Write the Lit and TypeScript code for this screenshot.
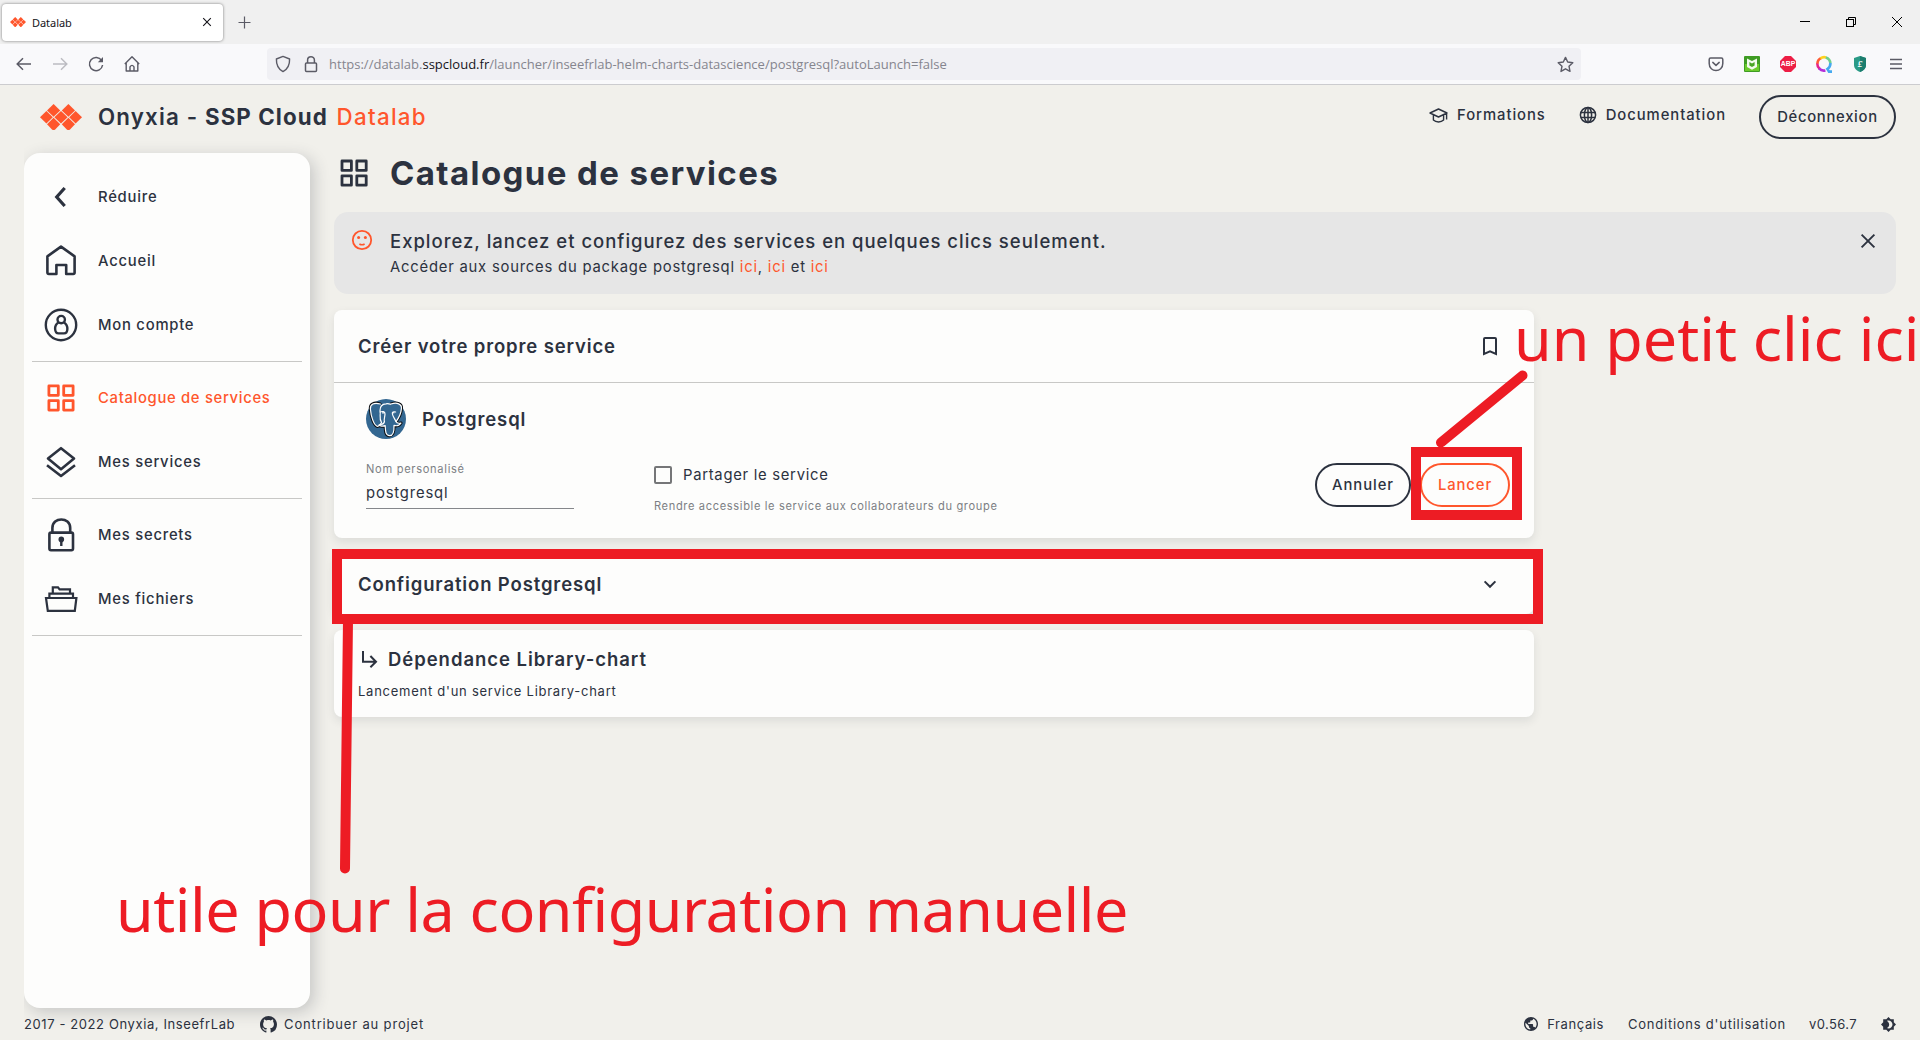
import { LitElement, html, css, svg } from "lit";
import { customElement } from "lit/decorators.js";
import { classMap } from "lit/directives/class-map.js";

const gridShape = svg`<g fill="none" stroke="currentColor" stroke-width="2.8" stroke-linejoin="round">
  <rect x="2" y="2" width="9.4" height="9.4"/><rect x="16.8" y="2" width="9.4" height="9.4"/>
  <rect x="2" y="16.8" width="9.4" height="9.4"/><rect x="16.8" y="16.8" width="9.4" height="9.4"/></g>`;

const navIcons = {
  back: svg`<path d="M19.5 8 L11.5 17 L19.5 26" transform="translate(1.2 0)" fill="none" stroke="currentColor" stroke-width="3.2"/>`,
  home: svg`<path d="M3.4 12.4 L17 2.6 L30.6 12.4 V28.6 Q30.6 30 29.2 30 H22.2 V21 H12.4 V30 H4.8 Q3.4 30 3.4 28.6 Z" fill="none" stroke="currentColor" stroke-width="2.6" stroke-linejoin="round"/>`,
  account: svg`<g fill="none" stroke="currentColor" stroke-width="2.4"><circle cx="17" cy="17" r="15.2"/><path d="M14.4 14.4 C9.6 17.4 10.4 25.4 14.6 25.4 H20 C24.2 25.4 24.800 17.400 20 14.400"/><circle cx="17.200" cy="11.600" r="3.700"/></g>`,
  catalog: svg`<g transform="translate(2.9 2.9)">${gridShape}</g>`,
  services: svg`<g fill="none" stroke="currentColor" stroke-width="2.6" stroke-linejoin="round"><path d="M17 3.2 L30 13.6 L17 24.2 L4 13.6 Z"/><path d="M3 20.2 L17 31 L31 20.2"/></g>`,
  secrets: svg`<g fill="none" stroke="currentColor" stroke-width="2.6" stroke-linejoin="round"><rect x="5.4" y="14.6" width="23.6" height="17.6" rx="1.6"/><path d="M8.4 14.4 V10 C8.4 -1.4 26.2 -1.4 26.2 10 V14.4"/></g><circle cx="17.3" cy="21.4" r="2.8" fill="currentColor"/><path d="M17.3 22 V28" stroke="currentColor" stroke-width="2.4"/>`,
  files: svg`<g fill="none" stroke="currentColor" stroke-width="2.2"><path d="M2 16 H32.4 L30.8 28.8 H3.8 Z"/><path d="M5.4 15.6 V11.6 H29 V15.6"/><path d="M8.8 11.4 V5.4 H14 L15.6 7.4 H26 V11.4"/></g>`,
};

type NavEntry = { icon: keyof typeof navIcons; label: string; active?: boolean; ruleAfter?: boolean };
const navigation: NavEntry[] = [
  { icon: "back", label: "Réduire" },
  { icon: "home", label: "Accueil" },
  { icon: "account", label: "Mon compte", ruleAfter: true },
  { icon: "catalog", label: "Catalogue de services", active: true },
  { icon: "services", label: "Mes services", ruleAfter: true },
  { icon: "secrets", label: "Mes secrets" },
  { icon: "files", label: "Mes fichiers", ruleAfter: true },
];

const logo = svg`<g fill="#ff562c">
  <path d="M13.6 0 L20.2 6.4 L13.6 12.8 L7 6.4 Z"/><path d="M28.4 0 L35 6.4 L28.4 12.8 L21.8 6.4 Z"/>
  <path d="M6.4 7 L12.8 13.2 L6.4 19.4 L0 13.2 Z"/><path d="M21 7 L27.6 13.2 L21 19.6 L14.4 13.2 Z"/><path d="M35.6 7 L42 13.2 L35.6 19.4 L29.2 13.2 Z"/>
  <path d="M13.6 13.8 L20.2 20.2 L15.2 25.4 Q13.6 26.6 12 25.4 L7 20.2 Z"/><path d="M28.4 13.8 L35 20.2 L30 25.4 Q28.4 26.6 26.8 25.4 L21.8 20.2 Z"/></g>`;

@customElement("browser-bar")
export class BrowserBar extends LitElement {
  static styles = css`
    :host { display: block; font-family: "Noto Sans", "Open Sans", sans-serif; }
    svg { display: block; flex: none; }
    .strip { display: flex; align-items: center; height: 44px; background: #f0f0f0; box-sizing: border-box; padding-left: 2px; }
    .tab { display: flex; align-items: center; width: 221px; height: 37px; box-sizing: border-box; padding: 0 11px 0 8px; border-radius: 4px; background: #fff; box-shadow: 0 0 3px rgba(0,0,0,.5); }
    .tabname { flex: 1; margin-left: 6px; font-size: 11px; letter-spacing: -.05px; color: #15141a; }
    .plus { margin-left: 15px; }
    .window { display: flex; gap: 34px; margin-left: auto; padding-right: 17px; }
    .tools { display: flex; align-items: center; height: 40px; background: #f9f9fb; border-bottom: 1px solid #cccccf; padding: 0 15px; color: #5b5b66; }
    .nav { display: flex; gap: 18px; width: 252px; }
    .url { display: flex; align-items: center; width: 1314px; height: 32px; box-sizing: border-box; padding: 0 7px 0 8px; border-radius: 4px; background: #f0f0f4; }
    .lock { margin-left: 11px; }
    .address { flex: 1; margin-left: 9px; font: 13px/20px "Open Sans", "Noto Sans", sans-serif; letter-spacing: .01px; color: #85858e; white-space: nowrap; }
    .domain { color: #15141a; }
    .extensions { display: flex; align-items: center; gap: 18px; margin-left: auto; }
    .abp { font: 700 6.5px "Liberation Sans", sans-serif; }
    .letter { font: italic 700 9px "Liberation Serif", serif; }
  `;
  render() {
    return html`
      <div class="strip">
        <div class="tab">
          <svg width="16" height="10" viewBox="0 0 42 26">${logo}</svg>
          <span class="tabname">Datalab</span>
          <svg width="10" height="10" viewBox="0 0 10 10"><path d="M1.200 1.200 L8.800 8.800 M8.800 1.200 L1.200 8.800" stroke="#15141a" stroke-width="1.1"/></svg>
        </div>
        <svg class="plus" width="13" height="13" viewBox="0 0 13 13"><path d="M6.5 .5 V12.5 M.5 6.5 H12.5" stroke="#5b5b66" stroke-width="1.2"/></svg>
        <div class="window">
          <svg width="12" height="12" viewBox="0 0 12 12"><path d="M1 5.5 H11" stroke="#000"/></svg>
          <svg width="12" height="12" viewBox="0 0 12 12" fill="none" stroke="#000"><rect x="1.5" y="3.5" width="7" height="7"/><path d="M3.5 3.5 V1.5 H10.5 V8.5 H8.5"/></svg>
          <svg width="12" height="12" viewBox="0 0 12 12"><path d="M1 1 L11 11 M11 1 L1 11" stroke="#000"/></svg>
        </div>
      </div>
      <div class="tools">
        <div class="nav">
          <svg width="18" height="18" viewBox="0 0 18 18" fill="none" stroke="currentColor" stroke-width="1.5"><path d="M16 9 H2.5 M8 3.2 L2.2 9 L8 14.8"/></svg>
          <svg width="18" height="18" viewBox="0 0 18 18" fill="none" stroke="#bcbcc2" stroke-width="1.5"><path d="M2 9 H15.5 M10 3.2 L15.8 9 L10 14.8"/></svg>
          <svg width="18" height="18" viewBox="0 0 18 18" fill="none" stroke="currentColor" stroke-width="1.5"><path d="M14.6 5.4 A6.6 6.6 0 1 0 15.6 10"/><path d="M16 2 V7.2 H10.8 Z" fill="currentColor" stroke="none"/></svg>
          <svg width="18" height="18" viewBox="0 0 18 18" fill="none" stroke="currentColor" stroke-width="1.4" stroke-linejoin="round"><path d="M1.8 9 L9 1.8 L16.2 9 M3.2 7.8 V16 H14.8 V7.8 M7 16 V11.8 Q9 9 11 11.8 V16"/></svg>
        </div>
        <div class="url">
          <svg width="16" height="18" viewBox="0 0 16 18" fill="none" stroke="currentColor" stroke-width="1.4" stroke-linejoin="round"><path d="M8 1.4 L14.6 4 C14.8 10 13 14 8 16.6 C3 14 1.2 10 1.4 4 Z"/></svg>
          <svg class="lock" width="18" height="18" viewBox="0 0 18 18" fill="none" stroke="currentColor" stroke-width="1.5"><rect x="3.5" y="8" width="11" height="8.6" rx="1"/><path d="M5.6 8 V5 C5.6 .6 12.4 .6 12.4 5 V8"/></svg>
          <span class="address">https://datalab.<span class="domain">sspcloud.fr</span>/launcher/inseefrlab-helm-charts-datascience/postgresql?autoLaunch=false</span>
          <svg width="17" height="17" viewBox="0 0 17 17" fill="none" stroke="currentColor" stroke-width="1.4" stroke-linejoin="round"><path d="M8.5 1.4 L10.7 6 L15.8 6.7 L12 10.2 L13 15.4 L8.5 12.8 L4 15.4 L5 10.2 L1.2 6.7 L6.3 6 Z"/></svg>
        </div>
        <div class="extensions">
          <svg width="18" height="18" viewBox="0 0 18 18" fill="none" stroke="currentColor" stroke-width="1.5" stroke-linejoin="round" stroke-linecap="round"><path d="M3.6 3 H14.4 Q15.8 3 15.8 4.4 V8.4 C15.8 17.8 2.2 17.8 2.2 8.4 V4.4 Q2.2 3 3.6 3 Z M5.8 7.4 L9 10.4 L12.2 7.4"/></svg>
          <svg width="18" height="18" viewBox="0 0 18 18"><rect x="1" y="1" width="16" height="16" rx="1" fill="#3f9c24"/><rect x="2" y="9" width="14" height="7" fill="#6ccb2c"/><path d="M4 3.4 L9 6 L14 3.4 V12 L9 14.8 L4 12 Z" fill="#f4fbef"/><path d="M6.4 7 L9 8.4 L11.6 7 V10.6 L9 12 L6.4 10.6 Z" fill="#4aa626"/></svg>
          <svg width="18" height="18" viewBox="0 0 18 18"><path d="M6 1 H12 L17 6 V12 L12 17 H6 L1 12 V6 Z" fill="#ed1e45"/><text class="abp" x="9" y="11.4" text-anchor="middle" textLength="14.5" lengthAdjust="spacingAndGlyphs" fill="#fff">ABP</text></svg>
          <svg width="18" height="18" viewBox="0 0 18 18" fill="none" stroke-width="2.6"><path d="M2.4 9 A6.4 6.4 0 0 1 6 3.2" stroke="#ff5c35"/><path d="M5.4 3.4 A6.6 6.6 0 0 1 11 2.4" stroke="#ffd21f"/><path d="M10.8 2.4 A6.6 6.6 0 0 1 15.4 8.4" stroke="#6fd08c"/><path d="M15.4 8 A6.6 6.6 0 0 1 12.4 14 L14 16.6 H17" stroke="#46a9ef"/><path d="M2.3 8.6 A6.6 6.6 0 0 0 4.6 13.8" stroke="#e5238c"/><path d="M4 13.4 A6.6 6.6 0 0 0 10.4 15.4" stroke="#b42fd8"/></svg>
          <svg width="18" height="18" viewBox="0 0 18 18"><path d="M9 1 L15 3 V10 C15 13.6 12 15.8 9 17 C6 15.8 3 13.6 3 10 V3 Z" fill="#2a9a86"/><path d="M9 1 L15 3 V10 C15 13.6 12 15.8 9 17 Z" fill="#1c7d6e"/><text class="letter" x="9" y="12.2" text-anchor="middle" fill="#fff">£</text></svg>
          <svg width="18" height="18" viewBox="0 0 18 18"><path d="M3 4.5 H15 M3 9 H15 M3 13.5 H15" stroke="currentColor" stroke-width="1.3"/></svg>
        </div>
      </div>`;
  }
}

@customElement("side-nav")
export class SideNav extends LitElement {
  static styles = css`
    :host { display: block; width: 286px; box-sizing: border-box; padding: 12px 8px; border-radius: 16px; background: #fdfdfc; box-shadow: 4px 4px 16px rgba(44,50,63,.22); clip-path: inset(-30px -40px -30px 0); }
    .item { display: flex; align-items: center; height: 64px; padding-left: 12px; color: #2c323f; }
    .item.active { color: #ff562c; }
    svg { width: 34px; height: 34px; flex: none; overflow: visible; }
    .label { margin-left: 20px; font-size: 14.8px; font-weight: 500; letter-spacing: .77px; white-space: nowrap; }
    .active .label { letter-spacing: .69px; }
    .rule { height: 1px; margin: 4px 0; background: #c8c8c6; }
  `;
  render() {
    return html`${navigation.map(
      (n) => html`
        <div class=${classMap({ item: true, active: !!n.active })}>
          <svg viewBox="0 0 34 34">${navIcons[n.icon]}</svg><span class="label">${n.label}</span>
        </div>
        ${n.ruleAfter ? html`<div class="rule"></div>` : ""}`
    )}`;
  }
}

@customElement("service-form")
export class ServiceForm extends LitElement {
  static styles = css`
    :host { display: flex; flex-direction: column; gap: 16px; width: 1200px; color: #2c323f; white-space: nowrap; }
    .card { background: #fdfdfc; border-radius: 8px; box-shadow: 0 4px 10px rgba(44,50,63,.1); }
    .top { display: flex; align-items: center; justify-content: space-between; height: 72px; padding: 0 32px 0 24px; border-bottom: 1px solid #c8c8c6; }
    .title { font-size: 18.5px; font-weight: 600; letter-spacing: .87px; line-height: 28px; }
    .body { height: 155px; box-sizing: border-box; padding: 16px 24px 0 32px; }
    .service { display: flex; align-items: center; gap: 16px; }
    svg { display: block; flex: none; }
    .fields { display: flex; align-items: flex-start; margin-top: 22px; }
    .name { width: 208px; height: 47px; border-bottom: 1px solid #85878b; }
    .caption { font-size: 11.1px; line-height: 16px; letter-spacing: .7px; color: #7c7f84; }
    .value { font-size: 14.8px; line-height: 22px; letter-spacing: .85px; margin-top: 5px; }
    .share { margin-left: 80px; }
    .check { display: flex; align-items: center; gap: 11px; height: 28px; }
    .box { width: 18px; height: 18px; box-sizing: border-box; border: 2px solid #757678; border-radius: 2px; }
    .checklabel { font-size: 14.8px; line-height: 20px; letter-spacing: .72px; }
    .hint { margin-top: 9px; font-size: 11.1px; line-height: 16px; letter-spacing: .643px; color: #7c7f84; }
    .buttons { display: flex; gap: 9px; margin: 2px 0 0 auto; }
    .button { width: 96px; height: 44px; box-sizing: border-box; border: 2px solid #2c323f; border-radius: 22px; text-align: center; font-size: 14.8px; font-weight: 500; line-height: 40px; letter-spacing: .92px; }
    .launch { width: 90px; border-color: #ff562c; color: #ff562c; }
    .config { display: flex; align-items: center; justify-content: space-between; height: 60px; padding: 0 37px 0 24px; }
    .dependency { height: 87px; box-sizing: border-box; padding: 15px 24px 0; }
    .depline { display: flex; align-items: center; gap: 10px; padding-left: 3px; }
    .deptitle { letter-spacing: .96px; }
    .depnote { margin-top: 8px; font-size: 13px; line-height: 20px; letter-spacing: .744px; }
  `;
  render() {
    return html`
      <section class="card">
        <div class="top">
          <span class="title">Créer votre propre service</span>
          <svg width="24" height="24" viewBox="0 0 24 24" fill="none" stroke="currentColor" stroke-width="2"><path d="M6 20 V5 Q6 4 7 4 H17 Q18 4 18 5 V20 L12 17.4 Z"/></svg>
        </div>
        <div class="body">
          <div class="service">
            <svg width="40" height="40" viewBox="0 0 40 40">
              <circle cx="20" cy="20" r="20" fill="#336791"/>
              <g fill="#336791" stroke-linejoin="round" stroke-linecap="round">
                <g stroke="#0b0f14" stroke-width="3.2">
                  <path d="M14 5 C8 3 4 5 4.4 10 C5 18 8 26 11 27.2 C13.4 28 14 25 15.6 23.6"/>
                  <path d="M25 5 C31 3 36 5 35.4 9.6 C35 15 32 20 30 22.6 C31 25 34 24.2 35 24 C33 27.4 29.4 26.8 28 26.4 C28.2 32 27.8 36.4 23.8 36.6 C19.4 36.8 19.4 32 19.2 26.6 C17 27.6 14 27 13 26"/>
                </g>
                <g stroke="#fff" stroke-width="1.2">
                  <path d="M14.4 5 C8 3.4 4 5 4.4 10 C5 18 8 26 11 27.2 C13.4 28 14 25 15.6 23.6 C12.6 19 15 16 14 11.4 C14 8 16 5 20 4.8 C25 4.2 28.4 7 29.8 12 C30.6 17 27 18 30 22.6"/>
                  <path d="M25 5 C31 3 36 5 35.4 9.6 C35 15 32 20 30 22.6 C31 25 34 24.2 35 24 C33 27.4 29.4 26.8 28 26.4 C28.2 32 27.8 36.4 23.8 36.6 C19.4 36.8 19.4 32 19.2 26.6 C17 27.6 14 27 13 26 C15 25 18 26 18.4 22.6"/>
                  <path d="M14.2 13 C16.4 12 19 12.4 19 15 C19 18 17.6 20 18.4 22.6 M29.6 13 C27.4 12.4 26 13 26.4 15 C27 18 29 20 30 22.6" fill="none"/>
                </g>
              </g>
              <circle cx="17" cy="13.8" r=".9" fill="#fff"/><circle cx="27.8" cy="13.8" r=".8" fill="#fff"/>
            </svg>
            <span class="title">Postgresql</span>
          </div>
          <div class="fields">
            <div class="name"><div class="caption">Nom personalisé</div><div class="value">postgresql</div></div>
            <div class="share">
              <div class="check"><span class="box"></span><span class="checklabel">Partager le service</span></div>
              <div class="hint">Rendre accessible le service aux collaborateurs du groupe</div>
            </div>
            <div class="buttons"><div class="button">Annuler</div><div class="button launch">Lancer</div></div>
          </div>
        </div>
      </section>
      <section class="card config">
        <span class="title">Configuration Postgresql</span>
        <svg width="14" height="14" viewBox="0 0 14 14"><path d="M1.6 4.4 L7 9.8 L12.4 4.4" fill="none" stroke="currentColor" stroke-width="2"/></svg>
      </section>
      <section class="card dependency">
        <div class="depline">
          <svg width="17" height="18" viewBox="0 0 17 18"><path d="M2 1 V11.8 H15 M9.4 6 L15 11.8 L9.4 17.2" fill="none" stroke="currentColor" stroke-width="2"/></svg>
          <span class="title deptitle">Dépendance Library-chart</span>
        </div>
        <div class="depnote">Lancement d'un service Library-chart</div>
      </section>`;
  }
}

@customElement("app-root")
export class AppRoot extends LitElement {
  static styles = css`
    :host { display: flex; flex-direction: column; position: relative; width: 1920px; height: 1040px; overflow: hidden; background: #f1f0eb; color: #2c323f; font-family: Inter, "Noto Sans", sans-serif; white-space: nowrap; }
    svg { display: block; flex: none; }
    .header { display: flex; align-items: center; height: 64px; margin-bottom: 4px; padding: 0 24px 0 40px; }
    .brand { margin-left: 16px; padding-bottom: 1px; font-size: 22.3px; font-weight: 600; letter-spacing: 1.17px; white-space: pre; }
    .strong { font-weight: 700; letter-spacing: 1.08px; }
    .lab { margin-left: 2px; font-weight: 500; letter-spacing: 1.3px; color: #ff562c; }
    .right { display: flex; align-items: center; margin-left: auto; font-size: 14.8px; font-weight: 500; }
    .link { display: flex; align-items: center; gap: 9px; padding-bottom: 4px; margin-right: 33px; letter-spacing: .95px; }
    .logout { height: 44px; width: 137px; box-sizing: border-box; border: 2px solid currentColor; border-radius: 22px; line-height: 40px; text-align: center; letter-spacing: .7px; }
    .main { display: flex; gap: 24px; height: 855px; padding: 0 24px; }
    .content { flex: 1; }
    .heading { display: flex; align-items: center; height: 40px; margin-bottom: 19px; padding-left: 6px; }
    h1 { margin: 0 0 0 22px; font-size: 33px; font-weight: 700; line-height: 40px; letter-spacing: 1.4px; }
    .banner { display: flex; height: 82px; box-sizing: border-box; margin-bottom: 16px; padding: 16px 20px 0 16px; border-radius: 14px; background: #e6e6e6; }
    .words { flex: 1; margin-left: 16px; }
    .smiley { color: #ff562c; }
    .lead { font-size: 18.5px; font-weight: 500; line-height: 26px; letter-spacing: .985px; }
    .sub { font-size: 14.8px; line-height: 26px; letter-spacing: .79px; }
    .ici { color: #ff562c; }
    .footer { display: flex; align-items: center; height: 32px; padding: 0 24px; font-size: 13px; letter-spacing: .6px; }
    .github { margin: 0 7px 0 25px; }
    .contribute { letter-spacing: .83px; }
    .lang { display: flex; align-items: center; gap: 9px; margin-left: auto; }
    .terms { margin-left: 24px; letter-spacing: .76px; }
    .version { margin-left: 23px; letter-spacing: .4px; }
    .theme { margin-left: 24px; }
    .marks { position: absolute; inset: 0; }
    .note { position: absolute; font: 61px/80px "Noto Sans", "Open Sans", sans-serif; color: #ed1c24; white-space: pre; }
    .click { left: 1514px; top: 298px; }
    .manual { left: 116px; top: 869px; letter-spacing: -.49px; }
  `;
  render() {
    return html`
      <browser-bar></browser-bar>
      <div class="header">
        <svg width="42" height="26" viewBox="0 0 42 26">${logo}</svg>
        <div class="brand">Onyxia - <span class="strong">SSP Cloud</span> <span class="lab">Datalab</span></div>
        <div class="right">
          <div class="link">
            <svg width="19" height="18" viewBox="0 0 19 18" fill="none" stroke="currentColor" stroke-width="1.4" stroke-linejoin="round"><path d="M1 7 L9.5 3 L18 7 L9.5 11 Z M4.4 9 V14 C7 16.6 12 16.6 14.6 14 V9 M17.6 7 V13.4"/></svg>
            Formations
          </div>
          <div class="link">
            <svg width="18" height="18" viewBox="0 0 18 18" fill="none" stroke="currentColor" stroke-width="1.5"><circle cx="9" cy="9" r="7.6"/><ellipse cx="9" cy="9" rx="3.6" ry="7.6"/><path d="M2 6.4 H16 M2 11.6 H16 M9 1.4 V16.6"/></svg>
            Documentation
          </div>
          <div class="logout">Déconnexion</div>
        </div>
      </div>
      <div class="main">
        <side-nav></side-nav>
        <div class="content">
          <div class="heading"><svg width="28" height="28" viewBox="0 0 28 28">${gridShape}</svg><h1>Catalogue de services</h1></div>
          <div class="banner">
            <svg class="smiley" width="24" height="24" viewBox="0 0 24 24"><circle cx="12" cy="12" r="9.2" fill="none" stroke="currentColor" stroke-width="1.8"/><circle cx="8.6" cy="9.4" r="1.5" fill="currentColor"/><circle cx="15.4" cy="9.4" r="1.5" fill="currentColor"/><path d="M9.4 16 Q12 17.6 14.6 16" fill="none" stroke="currentColor" stroke-width="1.6"/></svg>
            <div class="words">
              <div class="lead">Explorez, lancez et configurez des services en quelques clics seulement.</div>
              <div class="sub">Accéder aux sources du package postgresql <span class="ici">ici</span>, <span class="ici">ici</span> et <span class="ici">ici</span></div>
            </div>
            <svg width="16" height="26" viewBox="0 0 16 26"><path d="M1.6 6.6 L14.4 19.4 M14.4 6.6 L1.6 19.4" stroke="currentColor" stroke-width="1.9"/></svg>
          </div>
          <service-form></service-form>
        </div>
      </div>
      <div class="footer">
        <span>2017 - 2022 Onyxia, InseefrLab</span>
        <svg class="github" width="17" height="17" viewBox="0 0 16 16"><path fill="currentColor" d="M8 0C3.58 0 0 3.58 0 8c0 3.54 2.29 6.53 5.47 7.59.4.07.55-.17.55-.38 0-.19-.01-.82-.01-1.49-2.01.37-2.53-.49-2.69-.94-.09-.23-.48-.94-.82-1.13-.28-.15-.68-.52-.01-.53.63-.01 1.08.58 1.23.82.72 1.21 1.87.87 2.33.66.07-.52.28-.87.51-1.07-1.78-.2-3.64-.89-3.64-3.95 0-.87.31-1.59.82-2.15-.08-.2-.36-1.02.08-2.12 0 0 .67-.21 2.2.82.64-.18 1.32-.27 2-.27s1.36.09 2 .27c1.53-1.04 2.2-.82 2.2-.82.44 1.1.16 1.92.08 2.12.51.56.82 1.27.82 2.15 0 3.07-1.87 3.75-3.65 3.95.29.25.54.73.54 1.48 0 1.07-.01 1.93-.01 2.2 0 .21.15.46.55.38A8.01 8.01 0 0 0 16 8c0-4.42-3.58-8-8-8z"/></svg>
        <span class="contribute">Contribuer au projet</span>
        <div class="lang"><svg width="14" height="14" viewBox="2 2 20 20"><path fill="currentColor" d="M12 2C6.48 2 2 6.48 2 12s4.48 10 10 10 10-4.48 10-10S17.52 2 12 2zm-1 17.93c-3.95-.49-7-3.85-7-7.93 0-.62.08-1.21.21-1.79L9 15v1c0 1.1.9 2 2 2v1.93zm6.9-2.54c-.26-.81-1-1.39-1.9-1.39h-1v-3c0-.55-.45-1-1-1H8v-2h2c.55 0 1-.45 1-1V7h2c1.1 0 2-.9 2-2v-.41c2.93 1.19 5 4.06 5 7.41 0 2.08-.8 3.97-2.1 5.39z"/></svg>Français</div>
        <span class="terms">Conditions d'utilisation</span>
        <span class="version">v0.56.7</span>
        <svg class="theme" width="15" height="15" viewBox="0.7 0.7 22.6 22.6"><path fill="currentColor" d="M20 8.69V4h-4.69L12 .69 8.69 4H4v4.69L.69 12 4 15.31V20h4.69L12 23.31 15.31 20H20v-4.69L23.31 12 20 8.69zM12 18c-.89 0-1.74-.2-2.5-.55C11.56 16.5 13 14.42 13 12s-1.44-4.5-3.5-5.45C10.26 6.2 11.11 6 12 6c3.31 0 6 2.69 6 6s-2.69 6-6 6z"/></svg>
      </div>
      <svg class="marks" width="1920" height="1040" viewBox="0 0 1920 1040" fill="none" stroke="#ed1c24" stroke-width="10">
        <rect x="337" y="554" width="1201" height="65"/>
        <rect x="1416" y="452" width="101" height="63"/>
        <path d="M1522.5 375.5 L1441 442.5" stroke-linecap="round"/>
        <path d="M348 620 L345 868.5" stroke-linecap="round"/>
      </svg>
      <div class="note click">un petit clic ici</div>
      <div class="note manual">utile pour la configuration manuelle</div>`;
  }
}
